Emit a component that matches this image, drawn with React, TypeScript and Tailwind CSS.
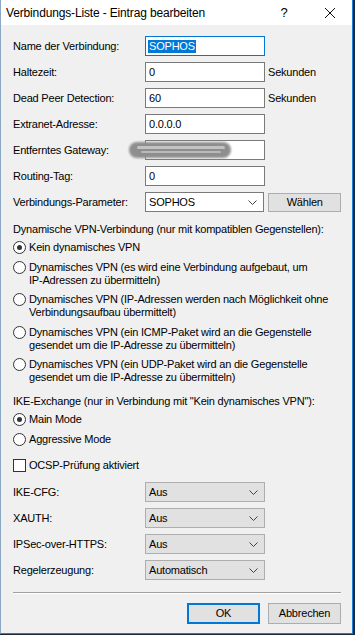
import { ReactNode } from 'react';

const font = { fontFamily: '"Liberation Sans", Arial, sans-serif' };

function Chevron() {
  return (
    <svg width="9" height="5" viewBox="0 0 9 5" className="shrink-0">
      <polyline points="0.5,0.5 4.5,4.5 8.5,0.5" fill="none" stroke="#444" strokeWidth="1" />
    </svg>
  );
}

function TextBox({ value, focused }: { value?: string; focused?: boolean }) {
  return (
    <div
      className={`w-[120px] h-[20px] bg-white border flex items-center px-[2px] ${
        focused ? 'border-[#0078d7]' : 'border-[#7a7a7a]'
      }`}
    >
      {focused ? (
        <span className="bg-[#0078d7] text-white leading-[13px] px-px">{value}</span>
      ) : (
        <span className="leading-[13px] px-px">{value}</span>
      )}
    </div>
  );
}

function Combo({ value, gray }: { value: string; gray?: boolean }) {
  return (
    <div
      className={`w-[120px] h-[20px] border flex items-center justify-between pl-[3px] pr-[6px] ${
        gray ? 'bg-[#e1e1e1] border-[#adadad]' : 'bg-white border-[#7a7a7a]'
      }`}
    >
      <span className="leading-[13px]">{value}</span>
      <Chevron />
    </div>
  );
}

function Row({ label, children }: { label: string; children: ReactNode }) {
  return (
    <div className="flex items-center h-[20px]">
      <div className="w-[132px] shrink-0">{label}</div>
      {children}
    </div>
  );
}

function Radio({ checked, lines }: { checked?: boolean; lines: string[] }) {
  return (
    <div className="flex items-start gap-[3px]">
      <div className="size-[13px] rounded-full border border-[#333] bg-white flex items-center justify-center shrink-0">
        {checked && <div className="size-[5px] rounded-full bg-[#333]" />}
      </div>
      <div className="leading-[13px]">
        {lines.map((l) => (
          <div key={l}>{l}</div>
        ))}
      </div>
    </div>
  );
}

function Button({ label, primary }: { label: string; primary?: boolean }) {
  return (
    <div
      className={`w-[73px] h-[21px] bg-[#e1e1e1] flex items-center justify-center ${
        primary ? 'border-2 border-[#0078d7]' : 'border border-[#adadad]'
      }`}
    >
      {label}
    </div>
  );
}

export default function App() {
  return (
    <div className="w-[355px] h-[635px] bg-[#1b2636] text-[11px] tracking-[-0.2px] text-black" style={font}>
      <div className="w-[353px] h-[634px] bg-[#f0f0f0] border-l border-r border-b border-l-[#8aa7c4] border-r-[#1883d7] border-b-[#1883d7] flex flex-col">
        {/* title bar */}
        <div className="h-[25px] bg-white flex items-center shrink-0">
          <span className="pl-[5px] text-[12px] tracking-[-0.15px] flex-1">Verbindungs-Liste - Eintrag bearbeiten</span>
          <span className="text-[13px] w-[46px] text-center">?</span>
          <svg width="46" height="12" viewBox="0 0 46 12" className="mr-[-1px]">
            <path d="M18 1 L28 11 M28 1 L18 11" stroke="#111" strokeWidth="1" />
          </svg>
        </div>

        <div className="pl-[12px] pr-[11px] pt-[11px] flex flex-col">
          <div className="flex flex-col gap-[6px]">
            <Row label="Name der Verbindung:">
              <TextBox value="SOPHOS" focused />
            </Row>
            <Row label="Haltezeit:">
              <TextBox value="0" />
              <span className="ml-[3px]">Sekunden</span>
            </Row>
            <Row label="Dead Peer Detection:">
              <TextBox value="60" />
              <span className="ml-[3px]">Sekunden</span>
            </Row>
            <Row label="Extranet-Adresse:">
              <TextBox value="0.0.0.0" />
            </Row>
            <div className="relative">
              <Row label="Entferntes Gateway:">
                <TextBox />
              </Row>
              <div className="absolute left-[116px] top-[2px] w-[102px] h-[16px] rounded-full bg-[#8e8e8e] blur-[1px]" />
              <div className="absolute left-[124px] top-[6px] w-[88px] h-[3px] rounded-full bg-[#cfcfcf] blur-[0.5px] opacity-80" />
              <div className="absolute left-[128px] top-[11px] w-[80px] h-[2px] rounded-full bg-[#c4c4c4] blur-[0.5px] opacity-80" />
            </div>
            <Row label="Routing-Tag:">
              <TextBox value="0" />
            </Row>
            <Row label="Verbindungs-Parameter:">
              <Combo value="SOPHOS" />
              <div className="ml-[4px] w-[73px] h-[19px] bg-[#e1e1e1] border border-[#adadad] flex items-center justify-center">
                Wählen
              </div>
            </Row>
          </div>

          <div className="mt-[11px] leading-[13px]">Dynamische VPN-Verbindung (nur mit kompatiblen Gegenstellen):</div>
          <div className="mt-[5px] flex flex-col gap-[6.5px]">
            <Radio checked lines={['Kein dynamisches VPN']} />
            <Radio lines={['Dynamisches VPN (es wird eine Verbindung aufgebaut, um', 'IP-Adressen zu übermitteln)']} />
            <Radio lines={['Dynamisches VPN (IP-Adressen werden nach Möglichkeit ohne', 'Verbindungsaufbau übermittelt)']} />
            <Radio lines={['Dynamisches VPN (ein ICMP-Paket wird an die Gegenstelle', 'gesendet um die IP-Adresse zu übermitteln)']} />
            <Radio lines={['Dynamisches VPN (ein UDP-Paket wird an die Gegenstelle', 'gesendet um die IP-Adresse zu übermitteln)']} />
          </div>

          <div className="mt-[11px] leading-[13px]">IKE-Exchange (nur in Verbindung mit "Kein dynamisches VPN"):</div>
          <div className="mt-[5px] flex flex-col gap-[7px]">
            <Radio checked lines={['Main Mode']} />
            <Radio lines={['Aggressive Mode']} />
          </div>

          <div className="mt-[13px] flex items-center gap-[3px]">
            <div className="size-[13px] border border-[#333] bg-white" />
            <span className="leading-[13px]">OCSP-Prüfung aktiviert</span>
          </div>

          <div className="mt-[10px] flex flex-col gap-[6px]">
            <Row label="IKE-CFG:">
              <Combo value="Aus" gray />
            </Row>
            <Row label="XAUTH:">
              <Combo value="Aus" gray />
            </Row>
            <Row label="IPSec-over-HTTPS:">
              <Combo value="Aus" gray />
            </Row>
            <Row label="Regelerzeugung:">
              <Combo value="Automatisch" gray />
            </Row>
          </div>

          <div className="mt-[12px] h-px bg-[#a0a0a0] border-b border-b-white box-content" />

          <div className="mt-[9px] flex justify-end gap-[8px]">
            <Button label="OK" primary />
            <Button label="Abbrechen" />
          </div>
        </div>
      </div>
    </div>
  );
}
